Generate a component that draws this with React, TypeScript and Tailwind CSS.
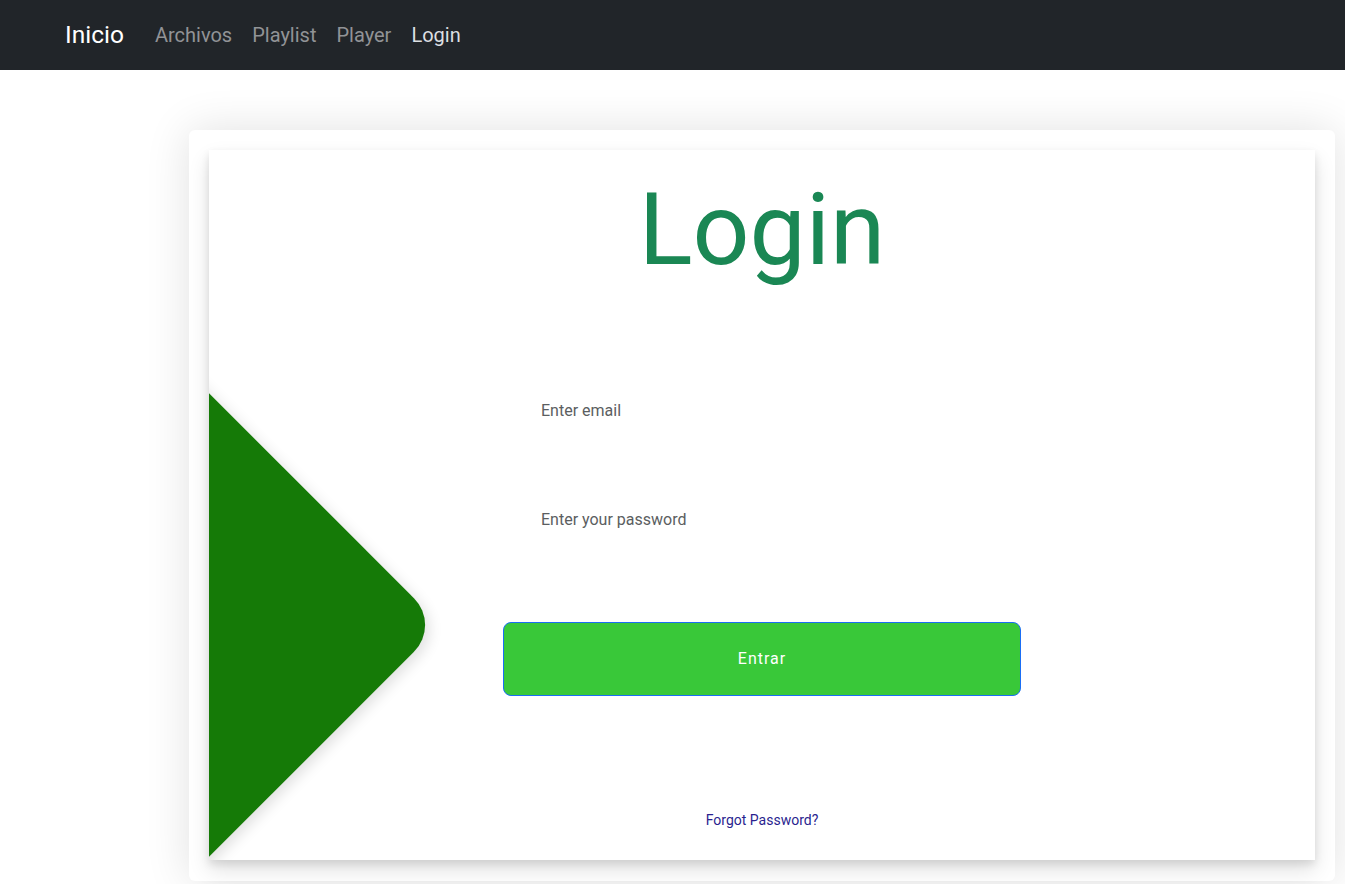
export default function App() {
  const links = ['Archivos', 'Playlist', 'Player'];

  return (
    <div className="min-h-screen bg-white font-['Roboto',sans-serif]">
      {/* top navbar */}
      <nav className="flex h-[70px] items-center bg-[#212529] pl-[65px]">
        <span className="mr-[21px] text-[24.5px] leading-none text-white">Inicio</span>
        {links.map((l) => (
          <a key={l} className="px-[10px] text-[20px] leading-none text-[#919396]">
            {l}
          </a>
        ))}
        <a className="px-[10px] text-[20px] leading-none text-[#dcdfe2]">Login</a>
      </nav>

      {/* outer card */}
      <div className="mt-[60px] mr-[10px] ml-[189px] rounded-[6px] bg-white p-[20px] pb-[21px] shadow-[0_0_45px_rgba(0,0,0,0.12)]">
        {/* inner card */}
        <div className="relative flex h-[710px] flex-col items-center overflow-hidden bg-white pt-[21px] shadow-[0_10px_20px_rgba(0,0,0,0.12),0_4px_8px_rgba(0,0,0,0.1)]">
          <div className="absolute top-[275px] left-[-251px] h-[400px] w-[400px] rotate-45 rounded-[38px] bg-[#157a07] shadow-[6px_0_14px_rgba(0,0,0,0.12)]" />

          <h1 className="relative text-[100px] leading-[117px] text-[#1a8754]">Login</h1>

          <form className="relative mt-[98px] flex w-[518px] flex-col">
            <input
              type="email"
              placeholder="Enter email"
              className="h-[48px] w-full bg-transparent pl-[38px] text-[16px] text-[#212529] outline-none placeholder:text-[#5b5e61]"
            />
            <input
              type="password"
              placeholder="Enter your password"
              className="mt-[61px] h-[48px] w-full bg-transparent pl-[38px] text-[16px] text-[#212529] outline-none placeholder:text-[#5b5e61]"
            />
            <button
              type="button"
              className="mt-[79px] h-[74px] w-full rounded-[8px] border border-[#1a6ef5] bg-[#39c839] text-[16px] tracking-[1px] text-white"
            >
              Entrar
            </button>
          </form>

          <a className="relative mt-[114px] text-[14px] leading-[20px] text-[#2a1f8f]">Forgot Password?</a>
        </div>
      </div>
    </div>
  );
}
